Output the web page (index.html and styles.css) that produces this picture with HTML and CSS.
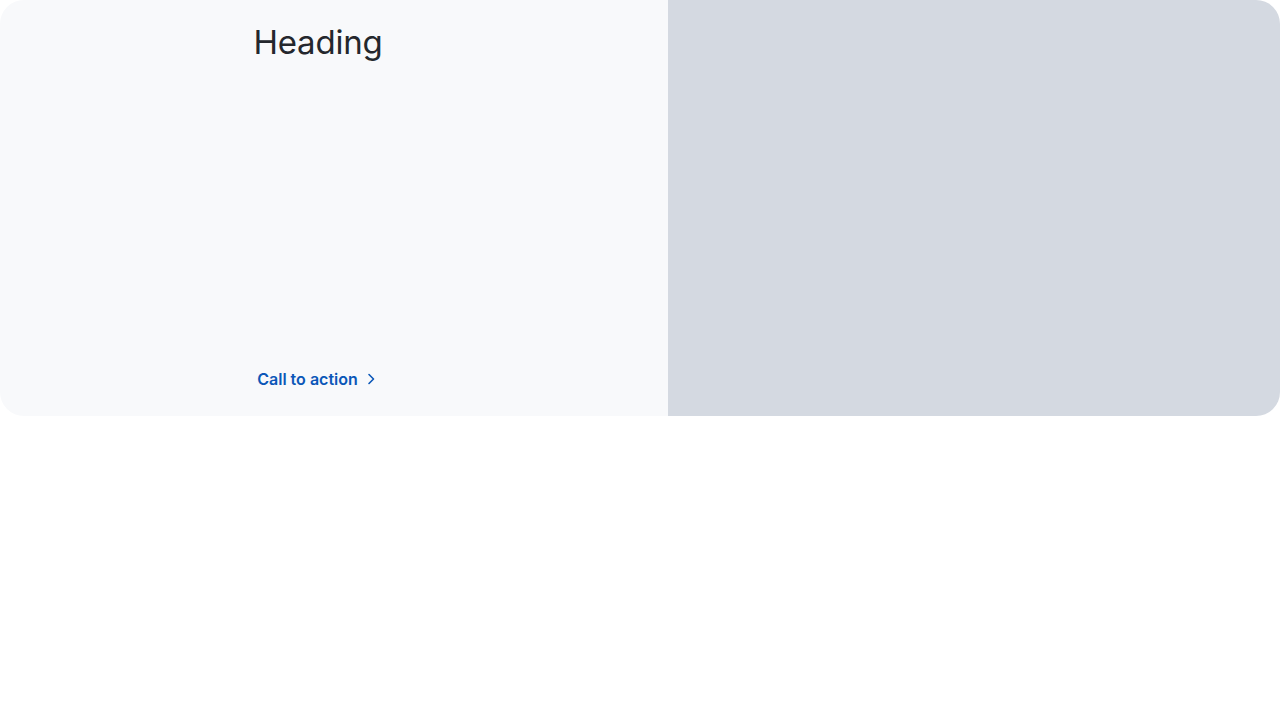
FILE: index.html
```html
<!DOCTYPE html>
<html>
<head>
<meta charset="utf-8">
<link rel="stylesheet" href="styles.css">
</head>
<body>
<section class="card">
  <div class="content">
    <h2 class="heading">Heading</h2>
    <a class="cta" href="#">Call to action
      <svg class="chev" width="16" height="16" viewBox="0 0 16 16" aria-hidden="true"><path d="M6 3.5 L10.5 8 L6 12.5" fill="none" stroke="currentColor" stroke-width="1.6" stroke-linecap="round" stroke-linejoin="round"/></svg>
    </a>
  </div>
  <div class="media"></div>
</section>
</body>
</html>
```
FILE: styles.css
```css
html, body { margin: 0; padding: 0; background: #ffffff; }
body { font-family: Inter, "Noto Sans", sans-serif; }
.card {
  display: flex;
  width: 1280px;
  height: 416px;
  border-radius: 24px;
  overflow: hidden;
}
.content {
  width: 668px;
  box-sizing: border-box;
  background: #f8f9fb;
  padding: 20px 32px 25px 0;
  display: flex;
  flex-direction: column;
  align-items: center;
  justify-content: space-between;
}
.media { flex: 1; background: #d4d9e1; }
.heading {
  margin: 0;
  font-size: 33px;
  font-weight: 400;
  color: #24272d;
  line-height: 44px;
  letter-spacing: -0.2px;
}
.cta {
  display: flex;
  align-items: center;
  gap: 5px;
  color: #0b57b8;
  font-size: 16px;
  font-weight: 600;
  text-decoration: none;
  line-height: 24px;
  letter-spacing: 0;
}
.chev { display: block; }
```
